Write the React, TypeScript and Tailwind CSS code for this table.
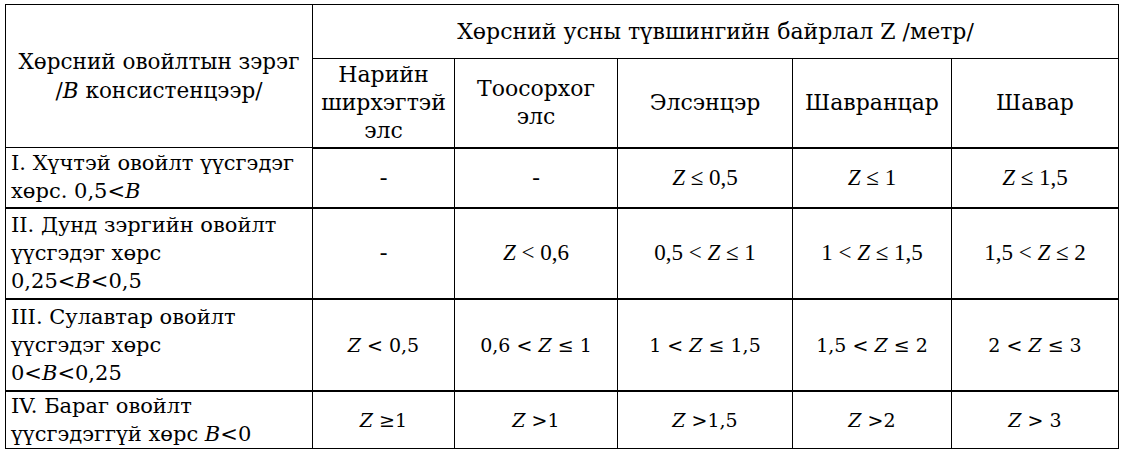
const serif = "font-['DejaVu_Serif',serif]"
const narrow = "font-['Liberation_Serif',serif]"

const Z = () => <i>Z</i>
const B = () => <i>B</i>

type Row = {
    label: React.ReactNode
    cells: React.ReactNode[]
    height: string
    condensed?: boolean
}

const rows: Row[] = [
    {
        label: <>I. Хүчтэй овойлт үүсгэдэг<br />хөрс. 0,5&lt;<B /></>,
        cells: ['-', '-', <><Z /> ≤ 0,5</>, <><Z /> ≤ 1</>, <><Z /> ≤ 1,5</>],
        height: 'h-[60px]',
        condensed: true,
    },
    {
        label: <>II. Дунд зэргийн овойлт<br />үүсгэдэг хөрс<br />0,25&lt;<B />&lt;0,5</>,
        cells: ['-', <><Z /> &lt; 0,6</>, <>0,5 &lt; <Z /> ≤ 1</>, <>1 &lt; <Z /> ≤ 1,5</>, <>1,5 &lt; <Z /> ≤ 2</>],
        height: 'h-[91px]',
        condensed: true,
    },
    {
        label: <>III. Сулавтар овойлт<br />үүсгэдэг хөрс<br />0&lt;<B />&lt;0,25</>,
        cells: [<><Z /> &lt; 0,5</>, <>0,6 &lt; <Z /> ≤ 1</>, <>1 &lt; <Z /> ≤ 1,5</>, <>1,5 &lt; <Z /> ≤ 2</>, <>2 &lt; <Z /> ≤ 3</>],
        height: 'h-[92px]',
    },
    {
        label: <>IV. Бараг овойлт<br />үүсгэдэггүй хөрс <B />&lt;0</>,
        cells: [<><Z /> ≥1</>, <><Z /> &gt;1</>, <><Z /> &gt;1,5</>, <><Z /> &gt;2</>, <><Z /> &gt; 3</>],
        height: 'h-[56px]',
    },
]

const soils = [
    <>Нарийн<br />ширхэгтэй<br />элс</>,
    <>Тоосорхог<br />элс</>,
    'Элсэнцэр',
    'Шавранцар',
    'Шавар',
]

const App = () => {
  return (
    <div className="w-[1123px] h-[453px] bg-white pl-[5px] pt-[4px] text-black">
        <table className={`${serif} table-fixed border-collapse w-[1113px] text-[21px] leading-[28px]`}>
            <colgroup>
                <col className="w-[307px]" />
                <col className="w-[142px]" />
                <col className="w-[163px]" />
                <col className="w-[175px]" />
                <col className="w-[159px]" />
                <col className="w-[167px]" />
            </colgroup>
            <thead className="text-[22px]">
                <tr className="h-[54px]">
                    <th rowSpan={2} className="border border-black font-normal text-center align-middle text-[21.5px] leading-[29px] whitespace-nowrap">
                        Хөрсний овойлтын зэрэг<br />/<B /> консистенцээр/
                    </th>
                    <th colSpan={5} className="border border-black font-normal text-center align-middle">
                        Хөрсний усны түвшингийн байрлал Z /метр/
                    </th>
                </tr>
                <tr className="h-[89px]">
                    {soils.map((s, i) => (
                        <th key={i} className="border border-black border-b-2 font-normal text-center align-middle">
                            {s}
                        </th>
                    ))}
                </tr>
            </thead>
            <tbody>
                {rows.map((row, r) => (
                    <tr key={r} className={row.height}>
                        <td className={`border border-black ${r < rows.length - 1 ? 'border-b-2' : ''} px-[5px] align-middle text-left`}>
                            {row.label}
                        </td>
                        {row.cells.map((c, i) => (
                            <td
                                key={i}
                                className={`border border-black ${r < rows.length - 1 ? 'border-b-2' : ''} text-center align-middle ${row.condensed ? `${narrow} text-[23px]` : 'text-[19px]'}`}
                            >
                                {c}
                            </td>
                        ))}
                    </tr>
                ))}
            </tbody>
        </table>
    </div>
  )
}

export default App
